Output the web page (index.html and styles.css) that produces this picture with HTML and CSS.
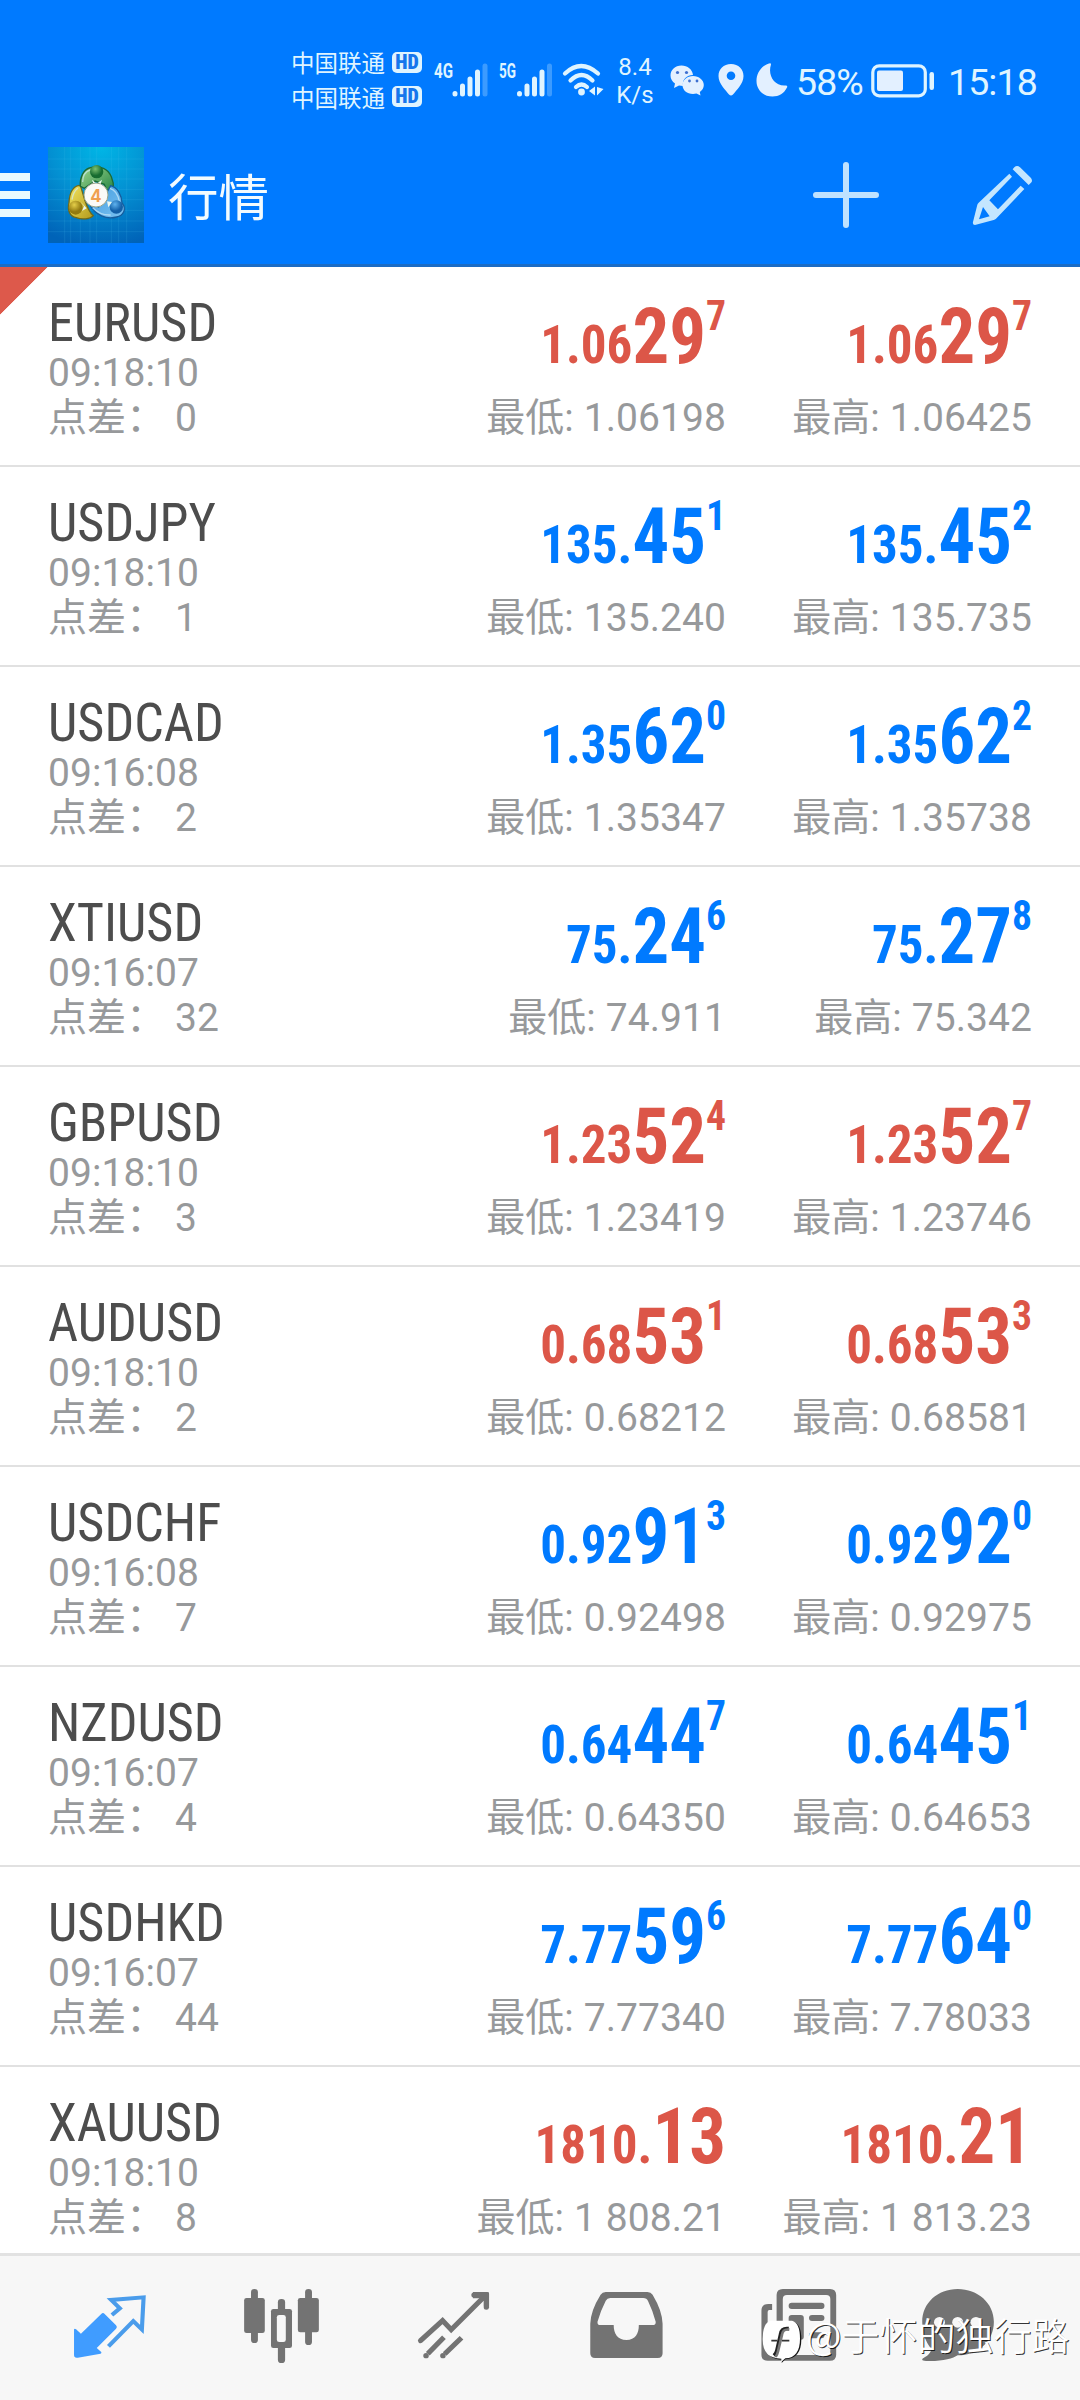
FILE: index.html
```html
<!DOCTYPE html>
<html lang="zh-CN">
<head>
<meta charset="utf-8">
<title>行情</title>
<link rel="stylesheet" href="styles.css">
</head>
<body>
<div class="screen">
  <header class="top">
    <div class="status">
      <div class="carriers">
        <div class="carrier">中国联通<span class="hd"><b>HD</b></span></div>
        <div class="carrier">中国联通<span class="hd"><b>HD</b></span></div>
      </div>
      <svg class="sig" width="54" height="36" viewBox="0 0 54 36"><text class="gen" x="0" y="17" textLength="19" lengthAdjust="spacingAndGlyphs">4G</text><g class="bars"><path d="M21 32.500v.5M28.500 25v8M36 18v15M43.500 11v22"/><path class="dim" d="M51 5v28"/></g></svg>
      <svg class="sig sig2" width="54" height="36" viewBox="0 0 54 36"><text class="gen" x="0" y="17" textLength="17" lengthAdjust="spacingAndGlyphs">5G</text><g class="bars"><path d="M20.500 32.500v.5M28 25v8M35.500 18v15M43 11v22"/><path class="dim" d="M50.500 5v28"/></g></svg>
      <svg class="wifi" width="42" height="36" viewBox="0 0 42 36"><g fill="none" stroke="#dff4ff" stroke-width="4.200" stroke-linecap="round"><path d="M3 10.500Q19 -4.500 36 10.500M8.500 17.500Q19.500 6.500 30.500 17.500M14 24Q19.500 19 25 24"/></g><circle cx="19.500" cy="29" r="3.400" fill="#dff4ff"/><path fill="#dff4ff" d="M27 28l6-4.500v9zM35 24v8.500l6.500-6.500z"/></svg>
      <div class="speed"><span>8.4</span><span>K/s</span></div>
      <svg class="wechat" width="34" height="30" viewBox="0 0 34 30"><path fill="#e3f0ff" d="M11.500.5C5 .5.500 5 .5 10.500c0 3.500 1.800 6 4.500 8L4 23l5-2.500 4 .5c-1-7 4-11 10-11C22.500 4.500 17.500.5 11.500.5z"/><path fill="#e3f0ff" d="M23 11c-6 0-10.500 4-10.500 9 0 5.200 4.500 9 10.500 9l3.500-.5 4 2-.7-3.500c2.500-1.700 4-4.200 4-7 0-5-4.800-9-10.800-9z"/><g fill="#3d6fd0"><circle cx="7.500" cy="7.500" r="1.600"/><circle cx="16.500" cy="7.500" r="1.600"/><circle cx="19.500" cy="16" r="1.400"/><circle cx="27" cy="16" r="1.400"/></g></svg>
      <svg class="pin" width="26" height="32" viewBox="0 0 26 32"><path fill="#e3f0ff" fill-rule="evenodd" d="M13 0C5.500 0 .5 5.300.5 12c0 8 7.500 14.500 10.500 18.500q2 2 4 0C18 26.500 25.500 20 25.500 12 25.500 5.300 20.500 0 13 0zm0 7.500a4.300 4.300 0 1 1 0 8.600 4.300 4.300 0 0 1 0-8.600z"/></svg>
      <svg class="moon" width="32" height="34" viewBox="0 0 32 34"><path fill="#e3f0ff" d="M13 .5q2-1 2 1C11.500 12 18 23 29 22.500q3-.5 2 2C28 30.500 23 33.500 16.500 33.500 7.500 33.500.5 27 .5 18 .5 10 5 3 13 .5z"/></svg>
      <span class="stxt pct">58%</span>
      <svg class="batt" width="64" height="34" viewBox="0 0 64 34"><rect x="1.800" y="1.800" width="52.500" height="30" rx="6.500" fill="none" stroke="#dff4ff" stroke-width="3.200"/><rect x="6" y="6.500" width="26" height="20.500" rx="2" fill="#e3f0ff"/><rect x="58.500" y="8" width="4.500" height="18" rx="2.200" fill="#dff4ff"/></svg>
      <span class="stxt clock">15:18</span>
    </div>
    <div class="bar">
      <div class="menu"><i></i><i></i><i></i></div>
      <svg class="logo" width="96" height="96" viewBox="0 0 288 288">
        <defs>
          <radialGradient id="bg" cx=".55" cy="0" r="1.050"><stop offset="0" stop-color="#00b6e6"/><stop offset=".5" stop-color="#0390d2"/><stop offset="1" stop-color="#0063b8"/></radialGradient>
          <linearGradient id="gr" x1="0" y1="0" x2="1" y2="1"><stop offset="0" stop-color="#9fd68d"/><stop offset="1" stop-color="#1c8040"/></linearGradient>
          <linearGradient id="ye" x1="0" y1="0" x2="1" y2="1"><stop offset="0" stop-color="#f3e55e"/><stop offset="1" stop-color="#b39a1c"/></linearGradient>
          <linearGradient id="bl" x1="0" y1="0" x2="1" y2="1"><stop offset="0" stop-color="#3f9be0"/><stop offset="1" stop-color="#7cc2f0"/></linearGradient>
          <radialGradient id="g2" cx=".4" cy=".3"><stop offset="0" stop-color="#7cc070"/><stop offset="1" stop-color="#176c30"/></radialGradient>
          <radialGradient id="y2" cx=".4" cy=".3"><stop offset="0" stop-color="#e5cf4a"/><stop offset="1" stop-color="#927a10"/></radialGradient>
          <radialGradient id="b2" cx=".4" cy=".3"><stop offset="0" stop-color="#5fb2ee"/><stop offset="1" stop-color="#1360a8"/></radialGradient>
        </defs>
        <rect width="288" height="288" fill="url(#bg)"/>
        <path stroke="#5cc8f0" stroke-opacity=".22" stroke-width="2" d="M50 0v288M68 0v288M97 0v288M126 0v288M146 0v288M190 0v288M212 0v288M236 0v288M0 36h288M0 66h288M0 96h288M0 127h288M0 158h288M0 190h288M0 222h288M0 254h288"/>
        <g stroke-width="4">
          <path fill="url(#ye)" stroke="#6e6a1c" d="M97 115c-20 0-33 20-34 52-6 24 4 43 22 45 18 7 42 4 51-6-10-8-18-24-26-48z"/>
          <path fill="url(#gr)" stroke="#1d6a35" d="M97 118c-2-26 9-49 27-55 16-5 33-4 44 2 20 9 30 38 28 60-3 9-9 16-15 20L169 112l-28-10-32 22z"/>
          <path fill="url(#bl)" stroke="#175d9d" d="M188 116c22 6 33 30 34 52 15 18 4 38-16 42-30 8-64-4-82-40l28 10z"/>
        </g>
        <path fill="none" stroke="#d2eefa" stroke-opacity=".65" stroke-width="4" d="M104 105c0-22 10-32 22-36M186 124c18 6 25 22 28 39M134 182c16 16 34 23 54 22M90 123c-10 8-16 20-18 35"/>
        <circle cx="146" cy="74" r="20" fill="url(#g2)"/>
        <circle cx="83" cy="182" r="21" fill="url(#y2)"/>
        <circle cx="205" cy="180" r="20" fill="url(#b2)"/>
        <path fill="#e9f6ef" d="M132 98l14 12 16-12-6 20h-18zM98 164l10 14-6 14 14-8zM192 165l-15-2 4 18z"/>
        <circle cx="144" cy="144" r="36" fill="#fbfaf7" stroke="#9aa58a" stroke-width="3"/>
        <text x="144" y="164" text-anchor="middle" class="four">4</text>
      </svg>
      <h1>行情</h1>
      <svg class="plus" width="66" height="66" viewBox="0 0 66 66"><path stroke="#bfe2ff" stroke-width="6" stroke-linecap="round" d="M33 3v60M3 33h60"/></svg>
      <svg class="pencil" width="60" height="60" viewBox="576 102 180 180"><path fill="#c3e6ff" fill-rule="evenodd" d="M703 109q8-8 17 0L753 141q6 9 0 14l-7 7L698 115zM688 128l8 9L628 208l26 27 68-71 11 10L648 263q-3 3-7 4l-56 15q-8 0-6-9l13-52q1-3 4-6zM609 228l-12 37 32-9z"/></svg>
    </div>
  </header>

  <main class="quotes">
    <section class="row red first"><div class="sym"><h2>EURUSD</h2><p>09:18:10</p><p><span>点差：</span> 0</p></div><div class="col"><div class="price"><small>1.06</small>29<sup>7</sup></div><p>最低: 1.06198</p></div><div class="col"><div class="price"><small>1.06</small>29<sup>7</sup></div><p>最高: 1.06425</p></div></section>
    <section class="row"><div class="sym"><h2>USDJPY</h2><p>09:18:10</p><p><span>点差：</span> 1</p></div><div class="col"><div class="price"><small>135.</small>45<sup>1</sup></div><p>最低: 135.240</p></div><div class="col"><div class="price"><small>135.</small>45<sup>2</sup></div><p>最高: 135.735</p></div></section>
    <section class="row"><div class="sym"><h2>USDCAD</h2><p>09:16:08</p><p><span>点差：</span> 2</p></div><div class="col"><div class="price"><small>1.35</small>62<sup>0</sup></div><p>最低: 1.35347</p></div><div class="col"><div class="price"><small>1.35</small>62<sup>2</sup></div><p>最高: 1.35738</p></div></section>
    <section class="row"><div class="sym"><h2>XTIUSD</h2><p>09:16:07</p><p><span>点差：</span> 32</p></div><div class="col"><div class="price"><small>75.</small>24<sup>6</sup></div><p>最低: 74.911</p></div><div class="col"><div class="price"><small>75.</small>27<sup>8</sup></div><p>最高: 75.342</p></div></section>
    <section class="row red"><div class="sym"><h2>GBPUSD</h2><p>09:18:10</p><p><span>点差：</span> 3</p></div><div class="col"><div class="price"><small>1.23</small>52<sup>4</sup></div><p>最低: 1.23419</p></div><div class="col"><div class="price"><small>1.23</small>52<sup>7</sup></div><p>最高: 1.23746</p></div></section>
    <section class="row red"><div class="sym"><h2>AUDUSD</h2><p>09:18:10</p><p><span>点差：</span> 2</p></div><div class="col"><div class="price"><small>0.68</small>53<sup>1</sup></div><p>最低: 0.68212</p></div><div class="col"><div class="price"><small>0.68</small>53<sup>3</sup></div><p>最高: 0.68581</p></div></section>
    <section class="row"><div class="sym"><h2>USDCHF</h2><p>09:16:08</p><p><span>点差：</span> 7</p></div><div class="col"><div class="price"><small>0.92</small>91<sup>3</sup></div><p>最低: 0.92498</p></div><div class="col"><div class="price"><small>0.92</small>92<sup>0</sup></div><p>最高: 0.92975</p></div></section>
    <section class="row"><div class="sym"><h2>NZDUSD</h2><p>09:16:07</p><p><span>点差：</span> 4</p></div><div class="col"><div class="price"><small>0.64</small>44<sup>7</sup></div><p>最低: 0.64350</p></div><div class="col"><div class="price"><small>0.64</small>45<sup>1</sup></div><p>最高: 0.64653</p></div></section>
    <section class="row"><div class="sym"><h2>USDHKD</h2><p>09:16:07</p><p><span>点差：</span> 44</p></div><div class="col"><div class="price"><small>7.77</small>59<sup>6</sup></div><p>最低: 7.77340</p></div><div class="col"><div class="price"><small>7.77</small>64<sup>0</sup></div><p>最高: 7.78033</p></div></section>
    <section class="row red"><div class="sym"><h2>XAUUSD</h2><p>09:18:10</p><p><span>点差：</span> 8</p></div><div class="col"><div class="price"><small>1810.</small>13</div><p>最低: 1 808.21</p></div><div class="col"><div class="price"><small>1810.</small>21</div><p>最高: 1 813.23</p></div></section>
  </main>

  <nav class="tabs">
    <svg preserveAspectRatio="none" viewBox="203.3 138 232.3 240"><path fill="#409cff" d="M215 268q2-4 6 0l14 13 59-59q5-6 10 0l33 34q5 5 0 10l-56 58 13 12q2 4-2 5l-66 12q-11 2-11-8z"/><path fill="none" stroke="#4a9ceb" stroke-width="12" stroke-linejoin="miter" d="M325 225l23-20-25-25 94-8-5 96-25-25-72 76"/></svg>
    <svg preserveAspectRatio="none" viewBox="702.8 138 232.3 240"><g fill="#737373"><rect x="729" y="147" width="20" height="162" rx="10"/><rect x="709" y="174" width="60" height="105" rx="7"/><rect x="886" y="147" width="20" height="168" rx="10"/><rect x="865" y="174" width="61" height="103" rx="7"/><rect x="807" y="177" width="21" height="192" rx="10"/><rect x="787" y="207" width="61" height="117" rx="7"/></g><rect x="804" y="225" width="26" height="81" rx="7" fill="#f7f7f7"/></svg>
    <svg preserveAspectRatio="none" viewBox="1202 138 232.3 240"><g fill="none" stroke="#737373" stroke-width="15"><path stroke-linecap="round" d="M1221 302l64-60 25 27 100-103M1376 165h36v37"/><path d="M1289 292l-47 49M1340 293l-49 49"/></g><g fill="#737373"><circle cx="1237" cy="347" r="8"/><circle cx="1286" cy="347" r="8"/><path d="M1373 156h42q5 0 5 5v43l-15-5v-24h-32z"/></g></svg>
    <svg preserveAspectRatio="none" viewBox="133.6 138 232.3 240"><path fill="#737373" fill-rule="evenodd" d="M191 156h121q10 0 15 8 28 48 29 87v89q0 14-14 14H160q-14 0-14-14v-89q1-39 30-87 5-8 15-8zM204 174q-9 0-13 8-16 32-24 63-1 10 8 10h39c0 26 11 45 37 45s36-19 36-45h40q10 0 9-10-8-31-22-61-4-10-14-10z"/></svg>
    <svg class="news" preserveAspectRatio="none" viewBox="638.9 138 232.3 240"><path fill="#737373" d="M677 192v18h-8q-5 0-5 6v124q0 6 6 6h20V165q0-18 18-18h137q18 0 18 18v179q0 18-18 18H664q-18 0-18-18V212q0-20 20-20z"/><rect x="708" y="165" width="138" height="180" rx="12" fill="#f7f7f7"/><g fill="#737373"><rect x="725" y="188" width="104" height="19" rx="9"/><rect x="725" y="225" width="44" height="74" rx="9"/><rect x="784" y="225" width="45" height="18" rx="9"/><rect x="784" y="277" width="45" height="18" rx="9"/></g></svg>
    <svg class="chat" preserveAspectRatio="none" viewBox="1097.7 138 232.3 240"><path fill="#737373" d="M1213 147c58 0 105 42 105 98 0 60-47 101-105 101-14 10-48 19-92 17-14 0-14-6-4-11q16-9 20-25c-18-22-27-50-27-82 0-56 45-98 103-98z"/><g fill="#f7f7f7"><circle cx="1160" cy="247" r="16"/><circle cx="1213" cy="247" r="16"/><circle cx="1266" cy="247" r="16"/></g></svg>
  </nav>

  <div class="mark">
    <svg width="42" height="44" viewBox="36 120 126 132"><path fill="#151515" d="M64 126h66q24 6 24 52 0 58-48 60l-11 11 1-10q-52 0-53-58-1-48 21-55z"/><path fill="#fff" d="M62 122h64q24 6 24 54 0 57-44 59l-12 10v-9q-56 0-56-58 0-50 24-56z"/><path fill="none" stroke="#222" stroke-width="11" d="M116 146c-16-2-22 2-24 16l-12 52q-2 7-8 13"/><path fill="none" stroke="#777" stroke-width="8" d="M118 149c-14-2-20 2-22 15l-12 50q-2 9-7 16"/><path fill="none" stroke="#333" stroke-width="5" d="M64 182h18M96 182h22"/></svg>
    <span>@于怀的独行路</span>
  </div>
</div>
</body>
</html>
```
FILE: styles.css
```css
* { box-sizing: border-box; }
body {
  margin: 0;
  font-family: Roboto, "Noto Sans CJK SC", sans-serif;
  background: #fff;
}
h1, h2, p { margin: 0; font-weight: 400; }
svg { display: block; flex: none; overflow: visible; }

.screen {
  position: relative;
  width: 1080px;
  height: 2400px;
  overflow: hidden;
  display: flex;
  flex-direction: column;
}

/* header */
.top {
  height: 267px;
  background: #007aff;
  border-bottom: 3px solid #1c6cc4;
}
.status {
  height: 129px;
  display: flex;
  align-items: flex-start;
  padding: 45px 0 0 291px;
  color: #dff4ff;
}
.carrier {
  display: flex;
  align-items: center;
  height: 34.500px;
  width: 143px;
  font: 23.500px/34px "Noto Sans CJK SC", sans-serif;
}
.hd {
  width: 30px;
  height: 21px;
  margin-left: 7px;
  border-radius: 5px;
  background: #dff4ff;
  color: #1676ec;
  font: 800 20px/21px Roboto, sans-serif;
  font-stretch: 75%;
  text-align: center;
}
.hd b { display: inline-block; }
.sig { margin-top: 16px; }
.sig2 { margin-left: 11px; }
.gen { font: 700 21px Roboto, sans-serif; fill: #dff4ff; }
.bars path { fill: none; stroke: #dff4ff; stroke-width: 5; stroke-linecap: round; }
.bars .dim { stroke: #3c9bff; }
.wifi { margin: 18px 0 0 9px; }
.speed {
  width: 40px;
  margin: 8px 0 0 11px;
  display: flex;
  flex-direction: column;
  align-items: center;
  font-size: 24px;
  line-height: 28px;
}
.wechat { margin: 20px 0 0 15px; }
.pin { margin: 19px 0 0 14px; }
.moon { margin: 18px 0 0 12px; }
.stxt {
  flex: none;
  font-size: 37.500px;
  line-height: 44px;
  white-space: nowrap;
}
.pct { width: 67px; margin: 15px 0 0 8px; letter-spacing: -.9px; }
.batt { margin: 19px 0 0 8px; }
.clock { width: 96px; margin: 15px 0 0 13px; letter-spacing: -.9px; }

.bar {
  height: 132px;
  display: flex;
  align-items: center;
}
.menu { width: 30px; display: grid; gap: 9.500px; }
.menu i { height: 8.500px; background: #e8faff; }
.logo { margin-left: 18px; }
.four { font: 700 50px Inter, sans-serif; fill: #f0a050; }
.bar h1 {
  flex: none;
  width: 669px;
  padding: 0 0 2px 24px;
  font: 400 50.500px/70px "Noto Sans CJK SC", sans-serif;
  color: #f2fbff;
}
.pencil { margin-left: 93px; }

/* quotes */
.quotes { flex: none; height: 1986px; overflow: hidden; }
.row {
  height: 200px;
  display: grid;
  grid-template-columns: 372px 306px 306px;
  padding: 0 48px;
  border-bottom: 2px solid #e1e1e1;
  color: #007aff;
}
.row.red { color: #dc5648; }
.first { background: linear-gradient(135deg, #dd594b 33.500px, transparent 34px) no-repeat; }
.row p {
  font-size: 39px;
  line-height: 45px;
  letter-spacing: .08px;
  color: #97999b;
  white-space: pre;
}
.row p span { font-family: "Noto Sans CJK SC", sans-serif; line-height: 0; }
.sym { padding-top: 28px; }
.sym h2 {
  font-size: 54px;
  line-height: 56px;
  font-stretch: 75%;
  transform: scaleX(.967);
  transform-origin: 0 0;
  color: #4d4d4d;
}
.col { padding-top: 32px; text-align: right; }
.price {
  height: 97px;
  font-size: 77px;
  line-height: 76px;
  font-weight: 700;
  font-stretch: 75%;
  white-space: nowrap;
  transform: scaleX(.945);
  transform-origin: 100% 0;
}
.price small { font-size: 54px; line-height: 1; }
.price sup { font-size: 42px; line-height: 0; vertical-align: 33px; }

/* tab bar */
.tabs {
  flex: 1;
  display: flex;
  align-items: flex-start;
  gap: 92px;
  padding: 30px 0 0 70px;
  background: #f7f7f7;
  border-top: 3px solid #e2e2e2;
}
.tabs svg { width: 80px; height: 80px; }
.tabs .news { margin-left: 1px; }
.tabs .chat { margin-left: -13px; }

/* signature laid over the tab bar */
.mark {
  position: absolute;
  left: 762px;
  top: 2320px;
  display: flex;
  align-items: flex-start;
}
.mark span {
  margin: -8px 0 0 2px;
  font: 350 38px/44px "Noto Sans CJK SC", sans-serif;
  color: #fff;
  text-shadow: 1px 1px .5px rgba(0, 0, 0, .8);
  white-space: nowrap;
}
```
